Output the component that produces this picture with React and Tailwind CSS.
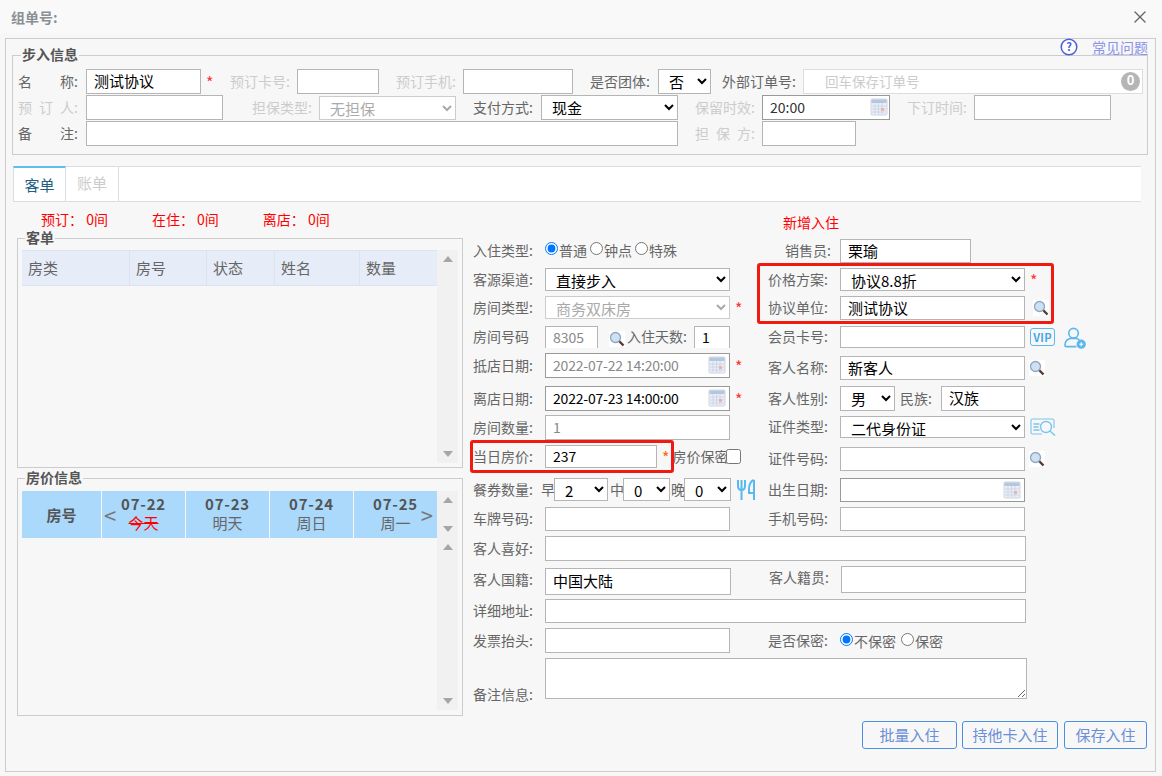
import React from "react";
import { X } from "lucide-react";

const Lbl = ({ children, className = "", color = "text-[#666]" }) => (
  <span className={`mb-[2px] shrink-0 whitespace-nowrap ${color} ${className}`}>{children}</span>
);

// label whose characters are spread over the full width
const Spread = ({ chars, className = "" }) => (
  <span className={`mb-[2px] flex w-[60px] shrink-0 justify-between ${className}`}>
    {chars.map((c, i) => (
      <span key={i}>{c}</span>
    ))}
  </span>
);

const Input = ({ value = "", className = "", color = "text-black", border = "border-[#b5b5b5]", size = "text-[15px]" }) => (
  <input
    defaultValue={value}
    className={`h-full shrink-0 border bg-white px-[7px] pb-[2px] outline-none ${color} ${border} ${size} ${className}`}
  />
);

const Sel = ({ value, className = "" }) => (
  <select
    defaultValue={value}
    className={`h-full shrink-0 border border-[#b5b5b5] bg-white pb-[1px] pl-[6px] text-[15px] text-black outline-none ${className}`}
  >
    <option>{value}</option>
  </select>
);

const Star = ({ className = "", color = "text-[#f33]" }) => (
  <span className={`shrink-0 text-[16px] ${color} ${className}`}>*</span>
);

const Calendar = ({ className = "" }) => (
  <svg viewBox="0 0 18 18" className={`absolute h-[18px] w-[18px] opacity-80 ${className}`}>
    <rect x="1" y="1" width="16" height="16" rx="1" fill="#e6ebf4" stroke="#c3cddc" />
    <rect x="1.5" y="1.5" width="15" height="3.5" fill="#a3b8d8" />
    <path d="M2 8h14M2 11h14M2 14h14M5 5v11M8.500 5v11M12 5v11" stroke="#b9c8de" strokeWidth="0.8" />
    <rect x="11" y="10" width="3" height="3" fill="#e8a097" />
  </svg>
);

const Search = ({ className = "" }) => (
  <svg viewBox="0 0 16 16" className={`h-[16px] w-[16px] shrink-0 ${className}`}>
    <rect width="16" height="16" fill="#fff" />
    <path d="M9.500 9.500 14.500 14.500" stroke="#5b3a2c" strokeWidth="2.400" />
    <circle cx="6.500" cy="6.500" r="5" fill="#cfe0f2" stroke="#8da6c4" strokeWidth="1.300" />
  </svg>
);

const Radio = ({ name, text, checked }) => (
  <label className="flex items-center">
    <input type="radio" name={name} defaultChecked={checked} className="mb-[3px] h-[13px] w-[13px]" />
    <span className="ml-[1px] text-[#666]">{text}</span>
  </label>
);

const Tri = ({ down }) => (
  <svg viewBox="0 0 10 6" className="h-[6px] w-[10px]">
    <path d={down ? "M0 0h10L5 6z" : "M0 6h10L5 0z"} fill="#a6a6a6" />
  </svg>
);

const Bar = ({ className = "" }) => (
  <div className={`flex w-[21px] shrink-0 flex-col items-center justify-between bg-[#f1f1f1] py-[6px] ${className}`}>
    <Tri />
    <Tri down />
  </div>
);

const Legend = ({ children }) => (
  <legend className="ml-[3px] px-[1px] pb-[2px] text-[14px] font-bold leading-[18px] text-[#555]">{children}</legend>
);

const HeadCell = ({ children, className = "" }) => (
  <div className={`flex items-center pl-[6px] text-[15px] text-[#666] ${className}`}>{children}</div>
);

const DayCell = ({ date, day, className = "", dayClass = "text-[#666]" }) => (
  <div className={`flex flex-col items-center justify-center bg-[#aad9fb] pb-[3px] ${className}`}>
    <span className="text-[15px] font-bold leading-[19px] tracking-[0.8px] text-[#555]">{date}</span>
    <span className={`text-[15px] leading-[19px] ${dayClass}`}>{day}</span>
  </div>
);

const off = "text-[#ccc]";
const dark = "border-[#999]";

export default function App() {
  return (
    <div className="relative h-[776px] w-[1162px] overflow-hidden bg-[#f7f7f7] font-['Noto_Sans_CJK_SC','Liberation_Sans',sans-serif] text-[14px] leading-[20px] text-[#666]">
      {/* title bar */}
      <div className="flex h-[33px] items-center justify-between bg-[#f9f9fa] pl-[11px] pr-[12px] pt-[1px]">
        <span className="text-[14px] font-bold text-[#8a8f94]">组单号:</span>
        <X className="h-[20px] w-[20px] text-[#666]" strokeWidth={1.6} />
      </div>

      <div className="relative ml-[5px] mt-[5px] h-[734px] w-[1151px] border border-[#ccc] pl-[6px]">
        {/* help link */}
        <div className="absolute right-[7px] top-[-2px] flex items-center">
          <svg viewBox="0 0 18 18" className="h-[18px] w-[18px]">
            <circle cx="9" cy="9" r="7.800" fill="#fff" stroke="#4a5fd8" strokeWidth="1.500" />
            <text x="9" y="13" textAnchor="middle" fontSize="11" fontWeight="700" fill="#4a5fd8">?</text>
          </svg>
          <span className="ml-[14px] text-[#8a94e8] underline decoration-[#c7ccf4]">常见问题</span>
        </div>

        {/* walk-in info */}
        <fieldset className="mt-[6px] h-[110px] w-[1136px] border border-[#ccc] pl-[5px]">
          <Legend>步入信息</Legend>
          <div className="mt-[4px] flex h-[25px] items-center">
            <Spread chars={["名", "称:"]} />
            <Input value="测试协议" className="ml-[8px] w-[115px]" />
            <Star className="w-[29px] pl-[5px]" />
            <Lbl className="w-[60px]" color={off}>预订卡号:</Lbl>
            <Input className="ml-[7px] w-[82px]" />
            <Lbl className="ml-[17px] w-[60px]" color={off}>预订手机:</Lbl>
            <Input className="ml-[7px] w-[110px]" />
            <Lbl className="ml-[17px] w-[60px]">是否团体:</Lbl>
            <Sel value="否" className="ml-[8px] w-[53px]" />
            <Lbl className="ml-[11px] w-[73px]">外部订单号:</Lbl>
            <div className="relative ml-[8px] h-full w-[340px]">
              <input
                placeholder="回车保存订单号"
                className="h-full w-full border border-[#ddd] bg-white pb-[2px] pl-[21px] text-[13.5px] outline-none placeholder:text-[#ccc]"
              />
              <span className="absolute right-[3px] top-[3px] flex h-[19px] w-[19px] items-start justify-center rounded-full bg-[#b5b5b5] text-[13px] font-bold leading-[15px] text-white">
                0
              </span>
            </div>
          </div>
          <div className="mt-[1px] flex h-[25px] items-center">
            <Spread chars={["预", "订", "人:"]} className={off} />
            <Input className="ml-[8px] w-[137px]" />
            <Lbl className="ml-[29px] w-[60px]" color={off}>担保类型:</Lbl>
            <select
              disabled
              defaultValue="无担保"
              className="ml-[7px] h-[24px] w-[137px] border border-[#ccc] bg-white pb-[1px] pl-[6px] text-[15px] text-[#aaa]"
            >
              <option>无担保</option>
            </select>
            <Lbl className="ml-[17px] w-[60px]">支付方式:</Lbl>
            <Sel value="现金" className="ml-[8px] w-[137px]" />
            <Lbl className="ml-[17px] w-[60px]" color={off}>保留时效:</Lbl>
            <div className="relative ml-[7px] h-full w-[128px]">
              <Input value="20:00" className="w-full" color="text-[#333]" border={dark} size="text-[14px]" />
              <Calendar className="right-[2px] top-[3px]" />
            </div>
            <Lbl className="ml-[17px] w-[60px]" color={off}>下订时间:</Lbl>
            <Input className="ml-[7px] w-[137px]" />
          </div>
          <div className="mt-[1px] flex h-[25px] items-center">
            <Spread chars={["备", "注:"]} />
            <Input className="ml-[8px] w-[592px]" />
            <Spread chars={["担", "保", "方:"]} className={`ml-[17px] ${off}`} />
            <Input className="ml-[7px] w-[94px]" />
          </div>
        </fieldset>

        {/* tabs */}
        <div className="ml-[1px] mt-[11px] flex h-[36px] w-[1128px] border-b border-[#d9dee3] bg-white">
          <div className="flex w-[53px] items-center justify-center border-x border-t-2 border-x-[#d9dee3] border-t-[#5bc0eb] pt-[1px] text-[15px] text-[#1f5f80]">
            客单
          </div>
          <div className="flex w-[53px] items-center justify-center border-r border-t border-[#d9dee3] pb-[3px] text-[15px] text-[#ccc]">
            账单
          </div>
          <div className="flex-1 border-t border-[#d9dee3]" />
        </div>

        <div className="flex">
          {/* left column */}
          <div className="ml-[5px] w-[446px] shrink-0">
            <div className="ml-[24px] mt-[7px] flex h-[19px] items-center gap-[44px] whitespace-pre text-[14px] text-[#f00]">
              <span>预订： 0间</span>
              <span>在住： 0间</span>
              <span>离店： 0间</span>
            </div>

            <fieldset className="h-[240px] border border-[#ccc] pl-[4px]">
              <Legend>客单</Legend>
              <div className="mt-[2px] flex h-[213px]">
                <div className="flex h-[36px] w-[415px] gap-[1px] border-y border-[#dde3ee] bg-[#dde3ee]">
                  <HeadCell className="w-[107px] bg-[#e6ecf8]">房类</HeadCell>
                  <HeadCell className="w-[76px] bg-[#e6ecf8]">房号</HeadCell>
                  <HeadCell className="w-[67px] bg-[#e6ecf8]">状态</HeadCell>
                  <HeadCell className="w-[84px] bg-[#e6ecf8]">姓名</HeadCell>
                  <HeadCell className="flex-1 bg-[#e6ecf8]">数量</HeadCell>
                </div>
                <Bar />
              </div>
            </fieldset>

            <fieldset className="h-[248px] border border-[#ccc] pl-[4px]">
              <Legend>房价信息</Legend>
              <div className="mt-[3px] flex">
                <div className="relative flex h-[47px] w-[415px] gap-[1px]">
                  <div className="flex w-[79px] items-center justify-center bg-[#aad9fb] text-[15px] font-bold text-[#555]">房号</div>
                  <DayCell date="07-22" day="今天" className="w-[83px]" dayClass="text-[#f00] line-through" />
                  <DayCell date="07-23" day="明天" className="w-[83px]" />
                  <DayCell date="07-24" day="周日" className="w-[83px]" />
                  <DayCell date="07-25" day="周一" className="flex-1" />
                  <span className="absolute left-[82px] top-[9px] text-[22px] leading-[28px] text-[#777]">&lt;</span>
                  <span className="absolute right-[4px] top-[9px] text-[22px] leading-[28px] text-[#777]">&gt;</span>
                </div>
                <Bar className="h-[47px]" />
              </div>
              <div className="flex justify-end pr-[4px]">
                <Bar className="h-[172px]" />
              </div>
            </fieldset>
          </div>

          {/* right form */}
          <div className="ml-[10px] w-[675px] shrink-0">
            <div className="flex">
              <div className="w-[295px] shrink-0">
                <div className="mt-[38px] flex h-[22px] items-center">
                  <Lbl className="w-[60px]">入住类型:</Lbl>
                  <div className="mb-[2px] ml-[12px] flex gap-[3px]">
                    <Radio name="ci" text="普通" checked />
                    <Radio name="ci" text="钟点" />
                    <Radio name="ci" text="特殊" />
                  </div>
                </div>
                <div className="mt-[6px] flex h-[23px] items-center">
                  <Lbl className="w-[60px]">客源渠道:</Lbl>
                  <Sel value="直接步入" className="ml-[12px] w-[185px]" />
                </div>
                <div className="mt-[5px] flex h-[23px] items-center">
                  <Lbl className="w-[60px]">房间类型:</Lbl>
                  <select
                    disabled
                    defaultValue="商务双床房"
                    className="ml-[12px] h-full w-[185px] border border-[#ccc] bg-white pb-[1px] pl-[6px] text-[15px] text-[#aaa]"
                  >
                    <option>商务双床房</option>
                  </select>
                  <Star className="ml-[5px]" />
                </div>
                <div className="mt-[7px] flex h-[22px] items-center">
                  <Lbl className="w-[60px]">房间号码</Lbl>
                  <Input value="8305" className="ml-[12px] w-[53px] border-b-0" color="text-[#888]" size="text-[14px]" />
                  <Search className="ml-[11px] mt-[3px]" />
                  <Lbl className="ml-[2px] w-[60px]">入住天数:</Lbl>
                  <Input value="1" className="ml-[7px] w-[36px] border-b-0" size="text-[14px]" />
                </div>
                <div className="mt-[5px] flex h-[25px] items-center">
                  <Lbl className="w-[60px]">抵店日期:</Lbl>
                  <div className="relative ml-[12px] h-full w-[185px]">
                    <Input value="2022-07-22 14:20:00" className="w-full tracking-[-0.2px]" color="text-[#888]" border={dark} size="text-[14px]" />
                    <Calendar className="right-[4px] top-[3px]" />
                  </div>
                  <Star className="ml-[5px]" />
                </div>
                <div className="mt-[8px] flex h-[25px] items-center">
                  <Lbl className="w-[60px]">离店日期:</Lbl>
                  <div className="relative ml-[12px] h-full w-[185px]">
                    <Input value="2022-07-23 14:00:00" className="w-full tracking-[-0.2px]" border={dark} size="text-[14px]" />
                    <Calendar className="right-[4px] top-[3px]" />
                  </div>
                  <Star className="ml-[5px]" />
                </div>
                <div className="mt-[4px] flex h-[25px] items-center">
                  <Lbl className="w-[60px]">房间数量:</Lbl>
                  <Input value="1" className="ml-[12px] w-[185px]" color="text-[#888]" size="text-[14px]" />
                </div>
                <div className="mt-[5px] flex h-[23px] items-center">
                  <Lbl className="w-[60px]">当日房价:</Lbl>
                  <Input value="237" className="ml-[12px] w-[112px]" size="text-[14px]" />
                  <Star className="ml-[5px]" color="text-[#f60]" />
                  <Lbl className="ml-[3px] w-[54px]">房价保密</Lbl>
                  <input type="checkbox" className="h-[15px] w-[15px] shrink-0" />
                </div>
                <div className="mt-[10px] flex h-[23px] items-center">
                  <Lbl className="w-[60px]">餐券数量:</Lbl>
                  <Lbl className="ml-[8px] w-[13px]">早</Lbl>
                  <Sel value="2" className="w-[54px]" />
                  <Lbl className="ml-[2px] w-[13px]">中</Lbl>
                  <Sel value="0" className="w-[47px]" />
                  <Lbl className="ml-[1px] w-[13px]">晚</Lbl>
                  <Sel value="0" className="w-[47px]" />
                  <svg viewBox="0 0 20 22" className="ml-[5px] h-[22px] w-[20px] shrink-0" fill="none" stroke="#5bb8ee" strokeWidth="2">
                    <path d="M2 1v6c0 3 2 4 3.500 4S9 10 9 7V1M5.500 1v20" />
                    <path d="M18 1c-3 1-5 4-5 9v4h5m0-13v20" />
                  </svg>
                </div>
                <div className="mt-[6px] flex h-[24px] items-center">
                  <Lbl className="w-[60px]">车牌号码:</Lbl>
                  <Input className="ml-[12px] w-[185px]" />
                </div>
              </div>

              <div className="w-[380px]">
                <div className="ml-[15px] mt-[10px] h-[20px] text-[14px] text-[#f00]">新增入住</div>
                <div className="mt-[7px] flex h-[24px] items-center">
                  <Lbl className="ml-[3px] w-[60px] text-right">销售员:</Lbl>
                  <Input value="栗瑜" className="ml-[9px] w-[131px]" />
                </div>
                <div className="mt-[5px] flex h-[23px] items-center">
                  <Lbl className="w-[60px]">价格方案:</Lbl>
                  <Sel value="协议8.8折" className="ml-[12px] w-[185px]" />
                  <Star className="ml-[5px]" />
                </div>
                <div className="mt-[5px] flex h-[24px] items-center">
                  <Lbl className="w-[60px]">协议单位:</Lbl>
                  <Input value="测试协议" className="ml-[12px] w-[185px]" />
                  <Search className="ml-[8px]" />
                </div>
                <div className="mt-[6px] flex h-[22px] items-center">
                  <Lbl className="w-[60px]">会员卡号:</Lbl>
                  <Input className="ml-[12px] w-[185px]" />
                  <span className="ml-[5px] flex h-[18px] w-[25px] shrink-0 items-center justify-center rounded-[3px] border border-[#5bb8ee] text-[11px] font-bold tracking-[0.3px] text-[#45a9e6]">
                    VIP
                  </span>
                  <svg viewBox="0 0 24 24" className="ml-[8px] h-[23px] w-[23px] shrink-0" fill="none" stroke="#5bb8ee" strokeWidth="1.700">
                    <circle cx="11" cy="7.500" r="5" />
                    <path d="M2 20c0-4 3-7 6-7h5c2 0 3 .500 4 1.500M2 20c0 1 .500 1.500 1.500 1.500H14" />
                    <circle cx="19" cy="19" r="4" fill="#5bb8ee" />
                    <path d="M17 19h4M19 17v4" stroke="#fff" strokeWidth="1.200" />
                  </svg>
                </div>
                <div className="mt-[8px] flex h-[24px] items-center">
                  <Lbl className="w-[60px]">客人名称:</Lbl>
                  <Input value="新客人" className="ml-[12px] w-[185px]" />
                  <Search className="ml-[4px]" />
                </div>
                <div className="mt-[6px] flex h-[25px] items-center">
                  <Lbl className="w-[60px]">客人性别:</Lbl>
                  <Sel value="男" className="ml-[12px] h-[22px] w-[55px]" />
                  <Lbl className="ml-[5px] w-[33px]">民族:</Lbl>
                  <Input value="汉族" className="ml-[8px] w-[84px]" />
                </div>
                <div className="mt-[5px] flex h-[22px] items-center">
                  <Lbl className="w-[60px]">证件类型:</Lbl>
                  <Sel value="二代身份证" className="ml-[12px] w-[185px]" />
                  <svg viewBox="0 0 26 18" className="ml-[5px] h-[18px] w-[26px] shrink-0" fill="none" stroke="#7cc4ee" strokeWidth="1.100">
                    <path d="M12 16H2.500A1.500 1.500 0 0 1 1 14.500v-12A1.500 1.500 0 0 1 2.500 1h20A1.500 1.500 0 0 1 24 2.500V10" />
                    <path d="M3.500 6h6M3.500 9h5M3.500 12h6" strokeWidth="1.400" />
                    <circle cx="16" cy="9" r="5.500" strokeWidth="1.400" />
                    <path d="m20 13 5 4.500" strokeWidth="1.500" />
                  </svg>
                </div>
                <div className="mt-[9px] flex h-[24px] items-center">
                  <Lbl className="w-[60px]">证件号码:</Lbl>
                  <Input className="ml-[12px] w-[185px]" />
                  <Search className="ml-[4px]" />
                </div>
                <div className="mt-[7px] flex h-[24px] items-center">
                  <Lbl className="w-[60px]">出生日期:</Lbl>
                  <div className="relative ml-[12px] h-full w-[185px]">
                    <Input className="w-full" border={dark} />
                    <Calendar className="right-[4px] top-[3px]" />
                  </div>
                </div>
                <div className="mt-[5px] flex h-[24px] items-center">
                  <Lbl className="w-[60px]">手机号码:</Lbl>
                  <Input className="ml-[12px] w-[185px]" />
                </div>
              </div>
            </div>

            {/* full width rows */}
            <div className="mt-[5px] flex h-[25px] items-center">
              <Lbl className="w-[60px]">客人喜好:</Lbl>
              <Input className="ml-[12px] w-[481px]" />
            </div>
            <div className="mt-[5px] flex h-[27px] items-start">
              <Lbl className="mt-[3px] w-[60px]">客人国籍:</Lbl>
              <Input value="中国大陆" className="ml-[12px] mt-[2px] h-[25px] w-[186px]" />
              <Lbl className="ml-[38px] mt-[1px] w-[60px]">客人籍贯:</Lbl>
              <Input className="ml-[12px] h-[25px] w-[185px]" />
            </div>
            <div className="mt-[6px] flex h-[24px] items-center">
              <Lbl className="w-[60px]">详细地址:</Lbl>
              <Input className="ml-[12px] w-[481px]" />
            </div>
            <div className="mt-[5px] flex h-[25px] items-center">
              <Lbl className="w-[60px]">发票抬头:</Lbl>
              <Input className="ml-[12px] w-[185px]" />
              <Lbl className="ml-[38px] w-[60px]">是否保密:</Lbl>
              <div className="ml-[12px] flex gap-[5px]">
                <Radio name="sec" text="不保密" checked />
                <Radio name="sec" text="保密" />
              </div>
            </div>
            <div className="mt-[5px] flex h-[41px] items-end">
              <span className="mb-[-5px] w-[60px] shrink-0 whitespace-nowrap text-[#666]">备注信息:</span>
              <textarea className="ml-[12px] h-full w-[482px] border border-[#b5b5b5] bg-white outline-none" />
            </div>

            <div className="mt-[22px] flex h-[28px] justify-end pr-[1px] text-[15px]">
              <button className="w-[95px] rounded-[3px] border border-[#4a90e2] text-[#6b8fd8]">批量入住</button>
              <button className="ml-[5px] w-[96px] rounded-[3px] border border-[#4a90e2] text-[#6b8fd8]">持他卡入住</button>
              <button className="ml-[6px] w-[83px] rounded-[3px] border border-[#4a90e2] text-[#6b8fd8]">保存入住</button>
            </div>
          </div>
        </div>
      </div>

      {/* red annotation boxes */}
      <div className="absolute left-[757px] top-[263px] h-[61px] w-[297px] rounded-[3px] border-[3px] border-[#f01a10]" />
      <div className="absolute left-[470px] top-[440px] h-[33px] w-[204px] rounded-[3px] border-[3px] border-[#f01a10]" />
    </div>
  );
}
